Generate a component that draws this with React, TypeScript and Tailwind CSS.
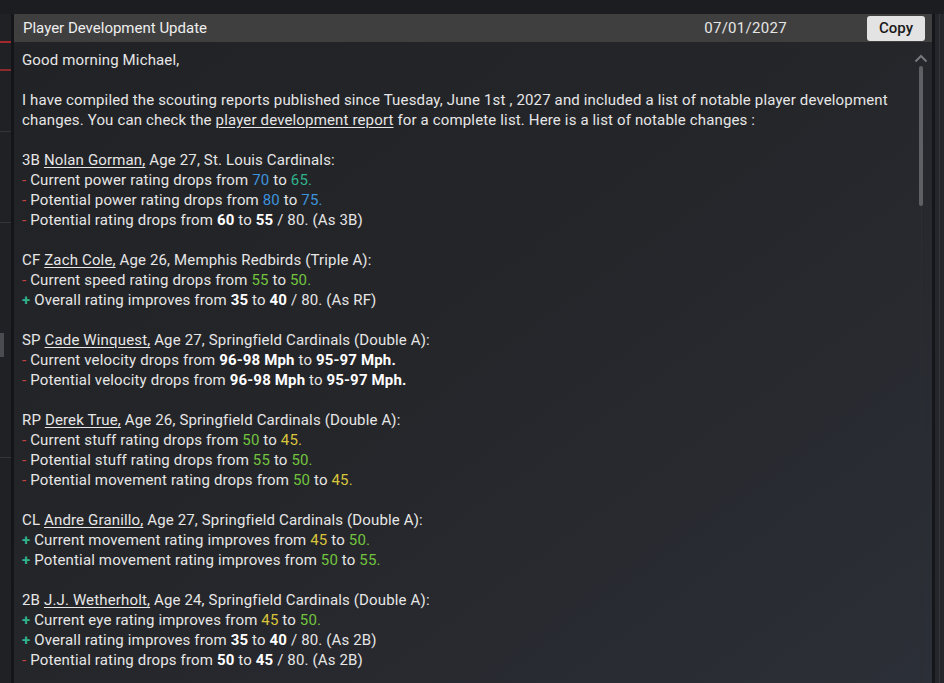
import React from 'react';

type Seg = { t: string; c?: string; b?: boolean };
type Line = { sign?: '-' | '+'; segs: Seg[] };
type Block = { pos: string; name: string; rest: string; lines: Line[] };

const BLUE = 'text-[#3d93dc]';
const TEAL = 'text-[#2fb38c]';
const GREEN = 'text-[#72c43e]';
const YELLOW = 'text-[#d9c53c]';

const blocks: Block[] = [
  {
    pos: '3B', name: 'Nolan Gorman,', rest: ' Age 27, St. Louis Cardinals:',
    lines: [
      { sign: '-', segs: [{ t: 'Current power rating drops from ' }, { t: '70', c: BLUE }, { t: ' to ' }, { t: '65.', c: TEAL }] },
      { sign: '-', segs: [{ t: 'Potential power rating drops from ' }, { t: '80', c: BLUE }, { t: ' to ' }, { t: '75.', c: BLUE }] },
      { sign: '-', segs: [{ t: 'Potential rating drops from ' }, { t: '60', b: true }, { t: ' to ' }, { t: '55', b: true }, { t: ' / 80. (As 3B)' }] },
    ],
  },
  {
    pos: 'CF', name: 'Zach Cole,', rest: ' Age 26, Memphis Redbirds (Triple A):',
    lines: [
      { sign: '-', segs: [{ t: 'Current speed rating drops from ' }, { t: '55', c: GREEN }, { t: ' to ' }, { t: '50.', c: GREEN }] },
      { sign: '+', segs: [{ t: 'Overall rating improves from ' }, { t: '35', b: true }, { t: ' to ' }, { t: '40', b: true }, { t: ' / 80. (As RF)' }] },
    ],
  },
  {
    pos: 'SP', name: 'Cade Winquest,', rest: ' Age 27, Springfield Cardinals (Double A):',
    lines: [
      { sign: '-', segs: [{ t: 'Current velocity drops from ' }, { t: '96-98 Mph', b: true }, { t: ' to ' }, { t: '95-97 Mph.', b: true }] },
      { sign: '-', segs: [{ t: 'Potential velocity drops from ' }, { t: '96-98 Mph', b: true }, { t: ' to ' }, { t: '95-97 Mph.', b: true }] },
    ],
  },
  {
    pos: 'RP', name: 'Derek True,', rest: ' Age 26, Springfield Cardinals (Double A):',
    lines: [
      { sign: '-', segs: [{ t: 'Current stuff rating drops from ' }, { t: '50', c: GREEN }, { t: ' to ' }, { t: '45.', c: YELLOW }] },
      { sign: '-', segs: [{ t: 'Potential stuff rating drops from ' }, { t: '55', c: GREEN }, { t: ' to ' }, { t: '50.', c: GREEN }] },
      { sign: '-', segs: [{ t: 'Potential movement rating drops from ' }, { t: '50', c: GREEN }, { t: ' to ' }, { t: '45.', c: YELLOW }] },
    ],
  },
  {
    pos: 'CL', name: 'Andre Granillo,', rest: ' Age 27, Springfield Cardinals (Double A):',
    lines: [
      { sign: '+', segs: [{ t: 'Current movement rating improves from ' }, { t: '45', c: YELLOW }, { t: ' to ' }, { t: '50.', c: GREEN }] },
      { sign: '+', segs: [{ t: 'Potential movement rating improves from ' }, { t: '50', c: GREEN }, { t: ' to ' }, { t: '55.', c: GREEN }] },
    ],
  },
  {
    pos: '2B', name: 'J.J. Wetherholt,', rest: ' Age 24, Springfield Cardinals (Double A):',
    lines: [
      { sign: '+', segs: [{ t: 'Current eye rating improves from ' }, { t: '45', c: YELLOW }, { t: ' to ' }, { t: '50.', c: GREEN }] },
      { sign: '+', segs: [{ t: 'Overall rating improves from ' }, { t: '35', b: true }, { t: ' to ' }, { t: '40', b: true }, { t: ' / 80. (As 2B)' }] },
      { sign: '-', segs: [{ t: 'Potential rating drops from ' }, { t: '50', b: true }, { t: ' to ' }, { t: '45', b: true }, { t: ' / 80. (As 2B)' }] },
    ],
  },
];

function Sign({ s }: { s?: '-' | '+' }) {
  if (s === '-') return <span className="text-[#c7433f]">- </span>;
  if (s === '+') return <span className="text-[#2fb38c] font-bold">+ </span>;
  return null;
}

export default function App() {
  return (
    <div className="w-[944px] h-[683px] overflow-hidden bg-[#1b1c1f] flex flex-col text-[#e6e6e6]" style={{ fontFamily: 'Roboto, "Noto Sans", sans-serif' }}>
      <div className="h-[14px] bg-[#1c1d20]" />
      <div className="flex flex-1 min-h-0">
        {/* left edge of the window behind */}
        <div className="w-[14px] flex">
          <div className="w-[11px] bg-[#202124] flex flex-col">
            <div className="h-[27px]" />
            <div className="h-[2px] bg-[#a3282c]" />
            <div className="h-[26px]" />
            <div className="h-[2px] bg-[#8c2a2e]" />
            <div className="h-[60px]" />
            <div className="h-px bg-[#34353a]" />
            <div className="h-[90px]" />
            <div className="h-px bg-[#34353a]" />
            <div className="h-[110px]" />
            <div className="h-[24px] w-[4px] bg-[#4a4b50]" />
            <div className="h-[100px]" />
            <div className="h-px bg-[#34353a]" />
          </div>
          <div className="w-[3px] bg-[#141518]" />
        </div>

        <div className="w-[918px] flex flex-col bg-gradient-to-br from-[#212225] via-[#25262a] to-[#2b2f37]">
          <div className="h-[28px] bg-[#3f3f3f] flex items-center pl-[9px] pr-[7px]">
            <span className="text-[15px] text-[#eeeeee]">Player Development Update</span>
            <span className="ml-auto mr-[80px] text-[15px] text-[#e6e6e6] tracking-[0.3px]">07/01/2027</span>
            <button className="w-[58px] h-[25px] rounded-[3px] bg-[#e3e3e3] text-[#1a1a1a] text-[15px] font-medium">Copy</button>
          </div>

          <div className="flex flex-1 min-h-0">
            <div className="flex-1 pl-[8px] pr-[4px] pt-[8px] text-[15px] tracking-[0.15px] leading-[20px]">
              <div>Good morning Michael,</div>
              <div className="h-[20px]" />
              <div>
                I have compiled the scouting reports published since Tuesday, June 1st , 2027 and included a list of notable player development changes. You can check the <span className="underline underline-offset-2">player development report</span> for a complete list. Here is a list of notable changes :
              </div>
              {blocks.map(b => (
                <div key={b.pos} className="mt-[20px]">
                  <div>{b.pos} <span className="underline underline-offset-2">{b.name}</span>{b.rest}</div>
                  {b.lines.map((l, i) => (
                    <div key={i}>
                      <Sign s={l.sign} />
                      {l.segs.map((s, j) => (
                        <span key={j} className={`${s.c ?? ''} ${s.b ? 'font-bold text-white' : ''}`}>{s.t}</span>
                      ))}
                    </div>
                  ))}
                </div>
              ))}
            </div>
            {/* scrollbar */}
            <div className="w-[22px] flex flex-col items-center pt-[12px]">
              <svg width="14" height="9" viewBox="0 0 14 9" className="text-[#77787c]">
                <path d="M1.5 7.5 L7 2 L12.5 7.5" stroke="currentColor" strokeWidth="2" fill="none" />
              </svg>
              <div className="mt-[3px] w-[4px] h-[140px] rounded-full bg-[#5f6064]" />
              <div className="w-px flex-1 bg-[#2c2d31]" />
            </div>
          </div>
        </div>

        <div className="w-[12px] flex">
          <div className="w-[3px] bg-[#15161a]" />
          <div className="w-[9px] bg-[#24262b] flex">
            <div className="w-[4px]" />
            <div className="w-px bg-[#34363c]" />
          </div>
        </div>
      </div>
    </div>
  );
}
